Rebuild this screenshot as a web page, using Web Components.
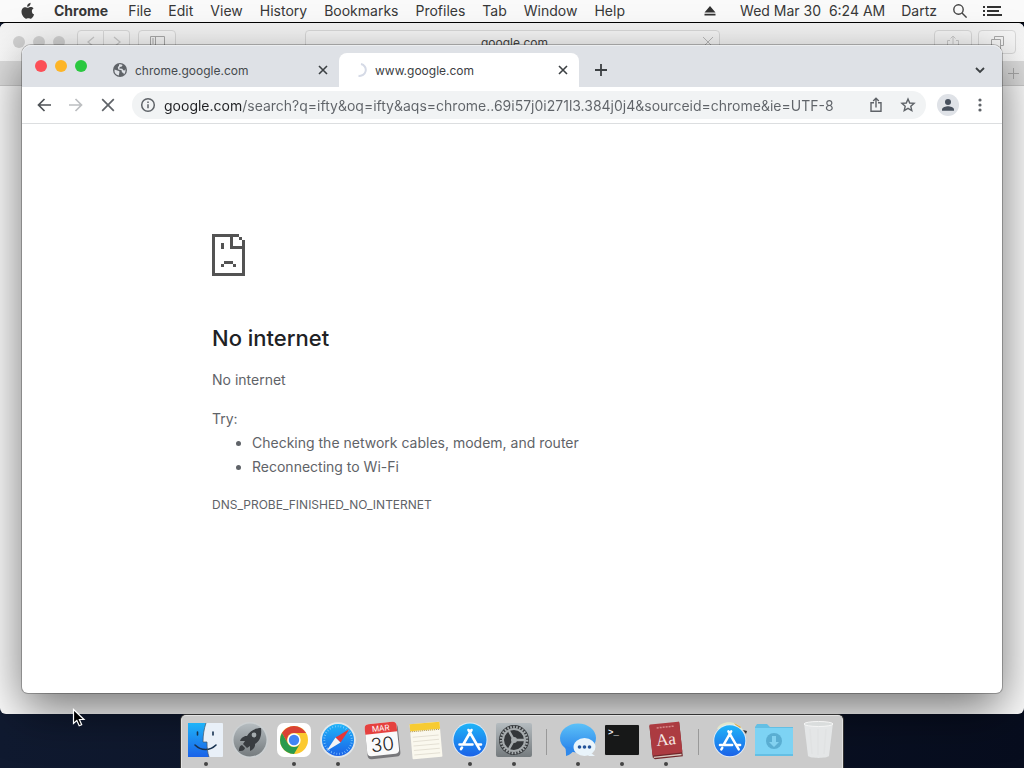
<!DOCTYPE html>
<html lang="en">
<head>
<meta charset="utf-8">
<title>www.google.com</title>
<style>
html, body { margin: 0; height: 100%; }
body { font-family: Inter, "Liberation Sans", sans-serif; overflow: hidden; }
</style>
</head>
<body>
<mac-desktop>
  <mac-menubar></mac-menubar>
  <safari-window></safari-window>
  <chrome-window><net-error></net-error></chrome-window>
  <mac-dock></mac-dock>
  <mouse-pointer></mouse-pointer>
</mac-desktop>
<script>
const BTN = `button{font:inherit;color:inherit;background:none;border:0;padding:0;margin:0;display:flex;align-items:center;justify-content:center}svg{display:block}`;
function define(name, css, html) {
  const t = document.createElement('template');
  t.innerHTML = `<style>${BTN}${css}</style>${html}`;
  customElements.define(name, class extends HTMLElement {
    constructor() {
      super();
      this.attachShadow({ mode: 'open' }).append(t.content.cloneNode(true));
    }
  });
}

define('mac-desktop', `
:host{display:block;position:relative;height:100vh;overflow:hidden;background:linear-gradient(90deg,#101a30,#070d1e)}
`, `<slot></slot>`);

/* ---------- menu bar ---------- */
define('mac-menubar', `
:host{display:flex;align-items:center;justify-content:space-between;box-sizing:border-box;height:23px;padding:0 22px 0 20px;background:#fafafa;border-bottom:1px solid #000;color:#383838;font-size:14px;line-height:20px;white-space:pre}
nav,.status{display:flex;align-items:center}
nav{gap:17px}
nav b{font-weight:700;margin:0 3px 0 1px}
.status{gap:16px}
.eject{margin-right:8px}
`, `
<nav aria-label="Application menu">
  <button aria-label="Apple"><svg width="16" height="18" viewBox="0 0 16 18" fill="#3c3c3c"><path d="M10.6.8c.1 1.2-.4 2.2-1 2.900-.7.8-1.600 1.200-2.500 1.100C7 3.700 7.500 2.700 8.100 2 8.800 1.300 9.800.9 10.600.8z"/><path d="M13.600 6.300c-1.300.8-1.800 1.900-1.700 3.100.1 1.500.9 2.500 2.200 3-.5 1.400-1.200 2.600-2.100 3.600-.6.600-1.300.9-2.200.5-1.100-.5-1.800-.5-2.900 0-.9.400-1.600.200-2.200-.4C1.500 13.300.6 8.900 2.500 6.500c1-1.300 2.600-1.700 4-1.100 1 .4 1.400.4 2.400 0 1.700-.6 3.500-.4 4.700.9z"/></svg></button>
  <button><b>Chrome</b></button><button>File</button><button>Edit</button><button>View</button><button>History</button><button>Bookmarks</button><button>Profiles</button><button>Tab</button><button>Window</button><button>Help</button>
</nav>
<div class="status">
  <button class="eject" aria-label="Eject"><svg width="12" height="12" viewBox="0 0 12 12" fill="#333"><path d="M6 1l5.500 6.500H.5zM.5 8.800h11v1.700H.5z"/></svg></button>
  <button>Wed Mar 30  6:24 AM</button>
  <button>Dartz</button>
  <button aria-label="Search"><svg width="14" height="14" viewBox="0 0 14 14" fill="none" stroke="#444" stroke-width="1.400"><circle cx="5.500" cy="5.500" r="4.700"/><path d="M9 9l4.600 4.600"/></svg></button>
  <button aria-label="Notification Center"><svg width="19" height="12" viewBox="0 0 19 12" fill="#333"><path d="M0 1h2v2H0zM0 5h2v2H0zM0 9h2v2H0zM4 1h14v2H4zM4 5h12v2H4zM4 9h15v2H4z"/></svg></button>
</div>`);

/* ---------- Safari behind ---------- */
define('safari-window', `
:host{display:flex;flex-direction:column;position:absolute;inset:23px 0 54px 0;border-radius:6px;overflow:hidden;background:#fcfcfc;font-size:12px;color:#444}
.bar{display:flex;align-items:center;box-sizing:border-box;height:38px;padding:0 8px 0 13px;background:linear-gradient(#f2f2f2,#fcfcfc)}
.dots{display:flex;gap:8px}
.dots i{width:12px;height:12px;border-radius:50%;background:#d2d2d2}
button,.addr{box-sizing:border-box;height:24px;border:1px solid #dadada;background:#f7f7f7;border-radius:4px;color:#c0c0c0}
.nav{display:flex;margin-left:12px}.nav button{width:27px;border-radius:4px 0 0 4px}.nav button+button{border-left:0;border-radius:0 4px 4px 0;width:26px}
.side{width:38px;margin-left:8px}
.addr{display:flex;align-items:center;flex:1;min-width:0;margin:0 214px 0 129px;padding:0 4px 0 22px}
input{flex:1;min-width:0;border:0;background:none;text-align:center;font:inherit;color:#444;padding:0}
.r{width:38px}.r+.r{margin-left:6px}
.tabs{display:flex;justify-content:flex-end;align-items:center;box-sizing:border-box;height:25px;background:#dedede;border-bottom:1px solid #cacaca}
.tabs button{width:22px;border:0;background:none}
`, `
<div class="bar">
  <div class="dots"><i></i><i></i><i></i></div>
  <div class="nav"><button aria-label="Back"><svg width="8" height="12" fill="none" stroke="#ccc" stroke-width="1.300"><path d="M7 1L1 6l6 5"/></svg></button><button aria-label="Forward"><svg width="8" height="12" fill="none" stroke="#ccc" stroke-width="1.300"><path d="M1 1l6 5-6 5"/></svg></button></div>
  <button class="side" aria-label="Sidebar"><svg width="15" height="12" fill="none" stroke="#aaa"><path d="M.5.5h14v11H.5zM5.500 0v12M2 3h2M2 5h2M2 7h2"/></svg></button>
  <div class="addr"><input aria-label="Address" value="google.com"><svg width="14" height="12" fill="none" stroke="#bbb"><path d="M2 1l10 10M12 1L2 11"/></svg></div>
  <button class="r" aria-label="Share"><svg width="12" height="14" fill="none" stroke="#ccc"><path d="M3 5.500H.5v8h11v-8H9M6 9V1M3.500 3.500L6 1l2.500 2.500"/></svg></button>
  <button class="r" aria-label="Tabs"><svg width="13" height="13" fill="none" stroke="#aaa"><path d="M.5 3.500h9v9h-9zM3.500 3V.5h9v9H10"/></svg></button>
</div>
<div class="tabs"><button aria-label="New tab"><svg width="11" height="11" stroke="#aaa"><path d="M5.500 0v11M0 5.500h11"/></svg></button></div>`);

/* ---------- Chrome ---------- */
define('chrome-tab', `
:host{display:flex;align-items:center;gap:8px;box-sizing:border-box;flex:0 1 240px;min-width:0;height:34px;padding:0 8px 0 14px;color:#45494d;font-size:12px}
:host([active]){background:#fff;border-radius:8px 8px 0 0;color:#3c4043}
.t{flex:1;min-width:0;overflow:hidden;white-space:nowrap}
button{width:16px;height:16px}
`, `<slot name="icon"></slot><span class="t"><slot></slot></span>
<button aria-label="Close tab"><svg width="10" height="10" stroke="#3c4043" stroke-width="1.600"><path d="M1 1l8 8M9 1L1 9"/></svg></button>`);

define('chrome-window', `
:host{display:flex;flex-direction:column;position:absolute;inset:45px 22px 75px 22px;border-radius:9px 9px 6px 6px;background:#fff;box-shadow:0 0 0 1px rgba(0,0,0,.25),0 16px 48px rgba(0,0,0,.55)}
.strip{display:flex;align-items:flex-end;height:42px;background:#dee1e6;border-radius:9px 9px 0 0;box-shadow:inset 0 1px #eceef0}
.lights{display:flex;gap:8px;width:64px;padding:0 0 15px 13px}
.lights button{width:12px;height:12px;border-radius:50%;background:#fc4f57}
.lights button:nth-child(2){background:#fdb527}
.lights button:nth-child(3){background:#2bc840}
.plus{width:44px;height:34px}
.more{width:44px;height:34px;margin-left:auto}
.bar{display:flex;align-items:center;box-sizing:border-box;height:37px;padding:0 6px;border-bottom:1px solid #dcdee0}
.bar button{width:32px;height:28px;flex:none}
form{display:flex;align-items:center;gap:8px;flex:1;min-width:0;margin:0 6px 0 8px;padding:0 2px 0 8px;background:#f1f3f4;border-radius:14px}
.acts{display:flex}
input{flex:1;min-width:0;height:28px;padding:0;border:0;outline:0;font:inherit;font-size:14px;color:#5f6368;-webkit-text-fill-color:transparent;background:linear-gradient(90deg,#202124 78px,#5f6368 78px);-webkit-background-clip:text;background-clip:text}
main{flex:1;min-height:0;overflow:hidden;border-radius:0 0 6px 6px}
`, `
<div class="strip">
  <div class="lights"><button aria-label="Close"></button><button aria-label="Minimize"></button><button aria-label="Zoom"></button></div>
  <chrome-tab>chrome.google.com<svg slot="icon" style="display:block" width="14" height="14" viewBox="0 0 14 14"><circle cx="7" cy="7" r="7" fill="#5f6368"/><path fill="#dee1e6" d="M1.500 6.500L5 7.800c1.500.2 1.800 1 1.300 2L5.800 12.600A5.700 5.700 0 0 1 1.500 6.500zM6 1.400c1.300-.3 2.600 0 3.600.6l-.8 1.500-2 .4-.5 1.700 3 .2 1 1.500 1.300.2.7-1.500c.6 2.100 0 4.200-1.300 5.400l-.6-1.400-1.500-.7-.3-2L5.300 6.500 4.800 4 6 3z"/></svg></chrome-tab>
  <chrome-tab active>www.google.com<svg slot="icon" style="display:block" width="14" height="14" viewBox="0 0 14 14" fill="none" stroke="#d5dae6" stroke-width="2"><path d="M8 1a6 6 0 0 1-2.500 11.800"/></svg></chrome-tab>
  <button class="plus" aria-label="New tab"><svg width="12" height="12" stroke="#3c4043" stroke-width="1.800"><path d="M6 0v12M0 6h12"/></svg></button>
  <button class="more" aria-label="Search tabs"><svg width="10" height="7" fill="none" stroke="#3c4043" stroke-width="1.800"><path d="M1 1l4 4 4-4"/></svg></button>
</div>
<div class="bar">
  <button aria-label="Back"><svg width="14" height="14" fill="none" stroke="#4e5256" stroke-width="1.700"><path d="M14 7H1.500M7.500 1l-6 6 6 6"/></svg></button>
  <button aria-label="Forward"><svg width="14" height="14" fill="none" stroke="#bcbec1" stroke-width="1.700"><path d="M0 7h12.500M6.500 1l6 6-6 6"/></svg></button>
  <button aria-label="Stop"><svg width="14" height="14" fill="none" stroke="#5f6368" stroke-width="1.700"><path d="M1.200 1.200l11.600 11.600M12.800 1.200L1.200 12.800"/></svg></button>
  <form onsubmit="return false">
    <svg width="16" height="16" viewBox="0 0 16 16" fill="none" stroke="#5f6368" stroke-width="1.500"><circle cx="8" cy="8" r="6.300"/><path d="M8 7.200v4M8 4.500v1.600"/></svg>
    <input aria-label="Address and search bar" spellcheck="false" value="google.com/search?q=ifty&amp;oq=ifty&amp;aqs=chrome..69i57j0i271l3.384j0j4&amp;sourceid=chrome&amp;ie=UTF-8">
    <div class="acts">
    <button type="button" aria-label="Share"><svg width="12" height="16" viewBox="0 0 12 16" fill="none" stroke="#5f6368" stroke-width="1.400"><path d="M4 5.700H1v8.600h10V5.700H8M6 10.500V1.500M3.200 4L6 1.200 8.800 4"/></svg></button>
    <button type="button" aria-label="Bookmark this tab"><svg width="16" height="16" viewBox="0 0 16 16" fill="none" stroke="#5f6368" stroke-width="1.400"><path d="M8 2l1.700 4 4.400.4-3.300 2.900 1 4.300L8 11.300l-3.800 2.300 1-4.300L1.900 6.400 6.300 6z"/></svg></button>
    </div>
  </form>
  <button aria-label="Profile"><svg width="22" height="22" viewBox="0 0 22 22"><circle cx="11" cy="11" r="11" fill="#dfe2e7"/><circle cx="11" cy="8" r="3" fill="#47505d"/><path fill="#47505d" d="M5 16.800v-1.500c0-2 4-3.100 6-3.100s6 1.100 6 3.100v1.500z"/></svg></button>
  <button aria-label="Menu"><svg width="4" height="14" fill="#5f6368"><circle cx="2" cy="2" r="1.600"/><circle cx="2" cy="7" r="1.600"/><circle cx="2" cy="12" r="1.600"/></svg></button>
</div>
<main><slot></slot></main>`);

define('net-error', `
:host{display:block;max-width:600px;margin:0 auto;padding-top:110px;color:#5f6368;font-size:14px;line-height:24px}
h1{margin:46px 0 14px;font-size:22px;line-height:32px;font-weight:500;color:#202124}
p{margin:0}
.try{margin-top:15px}
ul{margin:0;padding-left:40px}
.code{margin-top:14px;font-size:12px}
`, `
<svg width="33" height="42" viewBox="0 0 11 14" fill="#535353" shape-rendering="crispEdges" role="img" aria-label="Sad page"><path d="M0 0h9v1H7v3h3V2h1v12H0zM1 1v12h9V5H6V1zM9 1h1v1H9zM3 3h1v2H3zM4 9h3v1H4zM3 10h1v1H3zM7 10h1v1H7z" fill-rule="evenodd"/></svg>
<h1>No internet</h1>
<p>No internet</p>
<p class="try">Try:</p>
<ul><li>Checking the network cables, modem, and router</li><li>Reconnecting to Wi-Fi</li></ul>
<p class="code">DNS_PROBE_FINISHED_NO_INTERNET</p>`);

/* ---------- Dock ---------- */
define('dock-item', `
:host{display:flex;flex-direction:column;align-items:center;width:44px;padding-top:4px}
button{width:40px;height:40px}
i{width:4px;height:4px;margin-top:2px;border-radius:50%}
:host([running]) i{background:#444}
`, `<button><slot></slot></button><i></i>`);

const store = `<circle cx="20" cy="20" r="17.500" fill="#dfeaf5"/><circle cx="20" cy="20" r="16.500" fill="url(#sb)"/><g fill="none" stroke="#fff" stroke-width="2.600" stroke-linecap="round"><path d="M21.500 10L13.500 24M12 27.500l-1 1.700M18.500 10l8 14 3 5.200M9.500 24.500h13M27.500 24.500h3.500"/></g>`;
const defs = `<defs><linearGradient id="sb" x2="0" y2="1"><stop stop-color="#1fb4f8"/><stop offset="1" stop-color="#1a62e8"/></linearGradient><linearGradient id="gm" x2="0" y2="1"><stop stop-color="#b5bcc0"/><stop offset="1" stop-color="#757b7e"/></linearGradient><linearGradient id="mb" x2="0" y2="1"><stop stop-color="#5cc1f8"/><stop offset="1" stop-color="#2781ea"/></linearGradient></defs>`;
const art = {
  Finder: `<rect x="2" y="3" width="35" height="34" rx="1" fill="#e9f0f8"/><path d="M2 3h18c-2 6-3 12-3 19h4c0 6 .5 10 2 15H2z" fill="url(#sb)"/><path d="M11.500 12v3M27 12v3" stroke="#173250" stroke-width="1.600" stroke-linecap="round"/><path d="M9 25c6 6 15 6 21 0" fill="none" stroke="#173250" stroke-width="1.600" stroke-linecap="round"/><path d="M20 3c-2 6-3 12-3 19h4c0 6 .5 10 2 15" fill="none" stroke="#456"  stroke-width=".7"/>`,
  Launchpad: `<circle cx="20" cy="20" r="18" fill="#ccd0d2"/><circle cx="20" cy="20" r="16.500" fill="url(#gm)"/><path fill="#383c40" d="M31 8c-6 0-11 3-14 8-3-.5-6 2-7 5l5 0-2 3 4 4 3-2v5c3-1 5.500-4 5-7 5-3 7-9 6-16z"/><circle cx="24" cy="15" r="2.400" fill="#a4abae"/><path d="M12 25c-3 1-3 4-3 6 3 0 5 0 6-3z" fill="#383c40"/>`,
  Chrome: `<rect x="3" y="3" width="34" height="34" rx="7" fill="#fff"/><circle cx="20" cy="20" r="14" fill="#fbc92f"/><path fill="#d94234" d="M7.900 13A14 14 0 0 1 32.100 13H20a7 7 0 0 0-6.100 10.500z"/><path fill="#2a9a4c" d="M7.900 13A14 14 0 0 0 20 34l6.100-10.500a7 7 0 0 1-12.200 0z"/><circle cx="20" cy="20" r="6.700" fill="#fff"/><circle cx="20" cy="20" r="5.200" fill="#4285f4"/>`,
  Safari: `<circle cx="20" cy="20" r="17.800" fill="#e3e8eb"/><circle cx="20" cy="20" r="16" fill="url(#sb)"/><circle cx="20" cy="20" r="13.800" fill="none" stroke="#8accff" stroke-width="2" stroke-dasharray=".7 2.100"/><path fill="#e5363a" d="M31.500 9L17.500 17.500l5 5z"/><path fill="#f4f4f4" d="M8.500 31l9-13.500 5 5z"/>`,
  Calendar: `<g transform="rotate(-6 20 20)"><rect x="4" y="5" width="33" height="33" rx="4" fill="#77777a"/><rect x="4" y="3" width="32" height="32" rx="4" fill="#fafafa"/><path d="M4 13V7a4 4 0 0 1 4-4h24a4 4 0 0 1 4 4v6z" fill="#e5413f"/><text x="20" y="11" text-anchor="middle" font-size="8" fill="#fff">MAR</text><text x="20" y="31" text-anchor="middle" font-size="19" font-weight="300" fill="#222">30</text></g>`,
  Notes: `<g transform="rotate(-5 20 20)"><rect x="5" y="3" width="30" height="35" rx="1" fill="#faf8ee"/><path fill="#f7cb32" d="M5 3h30v7H5z"/><path d="M5 10.500h30" stroke="#aa9145" stroke-dasharray="1"/><path d="M7 16h26M7 20.500h26M7 25h26M7 29.500h26M7 34h26" stroke="#e4e0d4"/></g>`,
  'App Store': store,
  'System Preferences': `<rect x="2" y="3" width="36" height="34" rx="2" fill="url(#gm)"/><circle cx="20" cy="20" r="15" fill="#34373a"/><circle cx="20" cy="20" r="13" fill="none" stroke="#a6abad" stroke-width="2.500" stroke-dasharray="1.700 1.300"/><circle cx="20" cy="20" r="11" fill="none" stroke="#a6abad" stroke-width="2"/><path d="M20 20h10M20 20l-5-9M20 20l-5 9" stroke="#a6abad" stroke-width="2.400"/><circle cx="20" cy="20" r="3" fill="#a6abad"/>`,
  Messages: `<ellipse cx="20" cy="18" rx="18" ry="14.500" fill="url(#mb)"/><path d="M7 26c1 4 1 7 1 10 4-1 7-4 9-7z" fill="#2f89eb"/><ellipse cx="26.500" cy="27" rx="11" ry="9" fill="#e9f4fb"/><path d="M33 33l4 3-7 0z" fill="#e9f4fb"/><g fill="#24549a"><circle cx="21.500" cy="27" r="1.800"/><circle cx="26.500" cy="27" r="1.800"/><circle cx="31.500" cy="27" r="1.800"/></g>`,
  Terminal: `<rect x="2" y="4" width="36" height="32" rx="2" fill="#c7c7c7"/><rect x="3" y="5" width="34" height="30" rx="1" fill="#171818"/><text x="6" y="15" font-family="Liberation Mono, monospace" font-weight="700" font-size="9" fill="#eee">&gt;_</text>`,
  Dictionary: `<g transform="rotate(-6 20 20)"><path fill="#70282b" d="M5 4h30v34H7l-2-2z"/><rect x="5" y="3" width="30" height="31" rx="1" fill="#ac3b41"/><path d="M6 36h28" stroke="#d8c9c0" stroke-width="1.500"/><path d="M12 7h17" stroke="#d58a8a" stroke-width="1.500" stroke-dasharray="2 1"/><text x="20" y="25" text-anchor="middle" font-family="Liberation Serif, serif" font-size="17" fill="#f6e8e4">Aa</text></g>`,
  Applications: `<path d="M7 9c4-9 20-9 26 1z" fill="#e2e7cb"/><path d="M24 3l7 4-2 2z" fill="#dfa83b"/><path d="M33 10l4 1-1 3z" fill="#333"/><g transform="translate(1 2) scale(.94)">${store}</g>`,
  Downloads: `<path fill="#64bfe4" d="M1 7l2-3h10l3 3h23v29H1z"/><path fill="#7dd3f4" d="M1 8h38v26H1z"/><circle cx="20" cy="21" r="8" fill="#5aaed2"/><path fill="#83d2f0" d="M18 16h4v6h3l-5 5-5-5h3z"/>`,
  Trash: `<path d="M6 3h29l-4 33c-3 2.500-18 2.500-21 0z" fill="#e7e9ea" fill-opacity=".9"/><ellipse cx="20.500" cy="4" rx="14.500" ry="2.500" fill="#dadddd" stroke="#f5f5f5"/><path d="M12 9l2 25M20 9v26M28 9l-2 25" stroke="#e0e2e3" stroke-width="1.500"/>`
};
const running = ['Finder', 'Chrome', 'Safari', 'App Store', 'System Preferences', 'Messages', 'Terminal', 'Dictionary'];
const item = n => `<dock-item${running.includes(n) ? ' running' : ''}><svg style="display:block" width="40" height="40" viewBox="0 0 40 40" role="img" aria-label="${n}">${defs}${art[n]}</svg></dock-item>`;
const names = Object.keys(art);
define('mac-dock', `
:host{display:flex;position:absolute;bottom:0;left:50%;transform:translateX(-50%);box-sizing:border-box;height:53px;padding:0 2px;background:#cbcbcb;border:1px solid #e2e2e2;border-bottom:0;border-radius:5px 5px 0 0;box-shadow:0 0 0 1px #333}
hr{width:1px;height:26px;margin:13px 9px 0 10px;border:0;background:#999}
`, names.slice(0, 8).map(item).join('') + '<hr>' + names.slice(8, 11).map(item).join('') + '<hr>' + names.slice(11).map(item).join(''));

define('mouse-pointer', `:host{display:block;position:absolute;left:72px;top:708px}`,
`<svg width="14" height="20" viewBox="0 0 14 20"><path d="M1.500 1.500v14l3.300-3 2.400 5.300 2.500-1.100-2.300-5.200H12z" fill="#000" stroke="#fff" stroke-width="1.200"/></svg>`);
</script>
</body>
</html>
